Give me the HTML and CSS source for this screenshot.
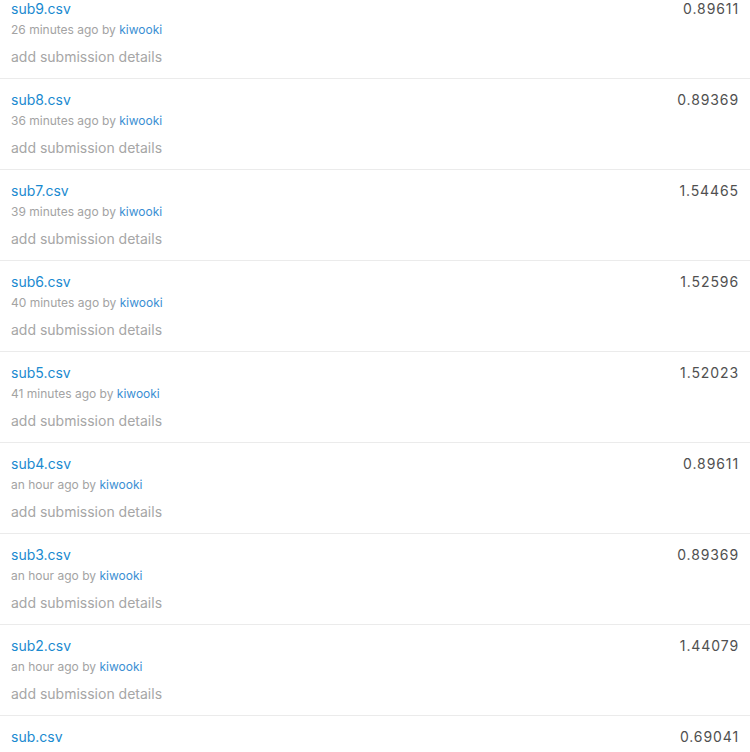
FILE: index.html
```html
<!DOCTYPE html>
<html>
<head>
<meta charset="utf-8">
<link rel="stylesheet" href="styles.css">
</head>
<body>
<div class="list">
  <div class="row">
    <div class="info">
      <a class="title">sub9.csv</a>
      <div class="meta">26 minutes ago by <a class="user">kiwooki</a></div>
      <div class="details">add submission details</div>
    </div>
    <div class="score">0.89611</div>
  </div>
  <div class="row">
    <div class="info">
      <a class="title">sub8.csv</a>
      <div class="meta">36 minutes ago by <a class="user">kiwooki</a></div>
      <div class="details">add submission details</div>
    </div>
    <div class="score">0.89369</div>
  </div>
  <div class="row">
    <div class="info">
      <a class="title">sub7.csv</a>
      <div class="meta">39 minutes ago by <a class="user">kiwooki</a></div>
      <div class="details">add submission details</div>
    </div>
    <div class="score">1.54465</div>
  </div>
  <div class="row">
    <div class="info">
      <a class="title">sub6.csv</a>
      <div class="meta">40 minutes ago by <a class="user">kiwooki</a></div>
      <div class="details">add submission details</div>
    </div>
    <div class="score">1.52596</div>
  </div>
  <div class="row">
    <div class="info">
      <a class="title">sub5.csv</a>
      <div class="meta">41 minutes ago by <a class="user">kiwooki</a></div>
      <div class="details">add submission details</div>
    </div>
    <div class="score">1.52023</div>
  </div>
  <div class="row">
    <div class="info">
      <a class="title">sub4.csv</a>
      <div class="meta">an hour ago by <a class="user">kiwooki</a></div>
      <div class="details">add submission details</div>
    </div>
    <div class="score">0.89611</div>
  </div>
  <div class="row">
    <div class="info">
      <a class="title">sub3.csv</a>
      <div class="meta">an hour ago by <a class="user">kiwooki</a></div>
      <div class="details">add submission details</div>
    </div>
    <div class="score">0.89369</div>
  </div>
  <div class="row">
    <div class="info">
      <a class="title">sub2.csv</a>
      <div class="meta">an hour ago by <a class="user">kiwooki</a></div>
      <div class="details">add submission details</div>
    </div>
    <div class="score">1.44079</div>
  </div>
  <div class="row last">
    <div class="info">
      <a class="title">sub.csv</a>
    </div>
    <div class="score">0.69041</div>
  </div>
</div>
</body>
</html>
```
FILE: styles.css
```css
html, body {
  margin: 0;
  padding: 0;
  background: #ffffff;
  overflow: hidden;
}
body {
  font-family: Inter, "Noto Sans", sans-serif;
}
.list {
  margin-top: -12px;
}
.row {
  display: flex;
  justify-content: space-between;
  align-items: flex-start;
  padding: 11px 11px 11px 11px;
  height: 68px;
  border-bottom: 1px solid #ebebeb;
}
.row.last {
  height: auto;
  border-bottom: none;
}
.info {
  display: flex;
  flex-direction: column;
}
.title {
  font-size: 14px;
  line-height: 20px;
  color: #1a8ad0;
  text-decoration: none;
}
.meta {
  font-size: 12px;
  line-height: 22px;
  color: #a3a3a3;
}
.user {
  color: #3b8fd3;
  text-decoration: none;
}
.details {
  margin-top: 6px;
  font-size: 14px;
  line-height: 20px;
  color: #a6a6a6;
}
.score {
  font-size: 14px;
  line-height: 20px;
  letter-spacing: 0.9px;
  color: #505050;
}
```
